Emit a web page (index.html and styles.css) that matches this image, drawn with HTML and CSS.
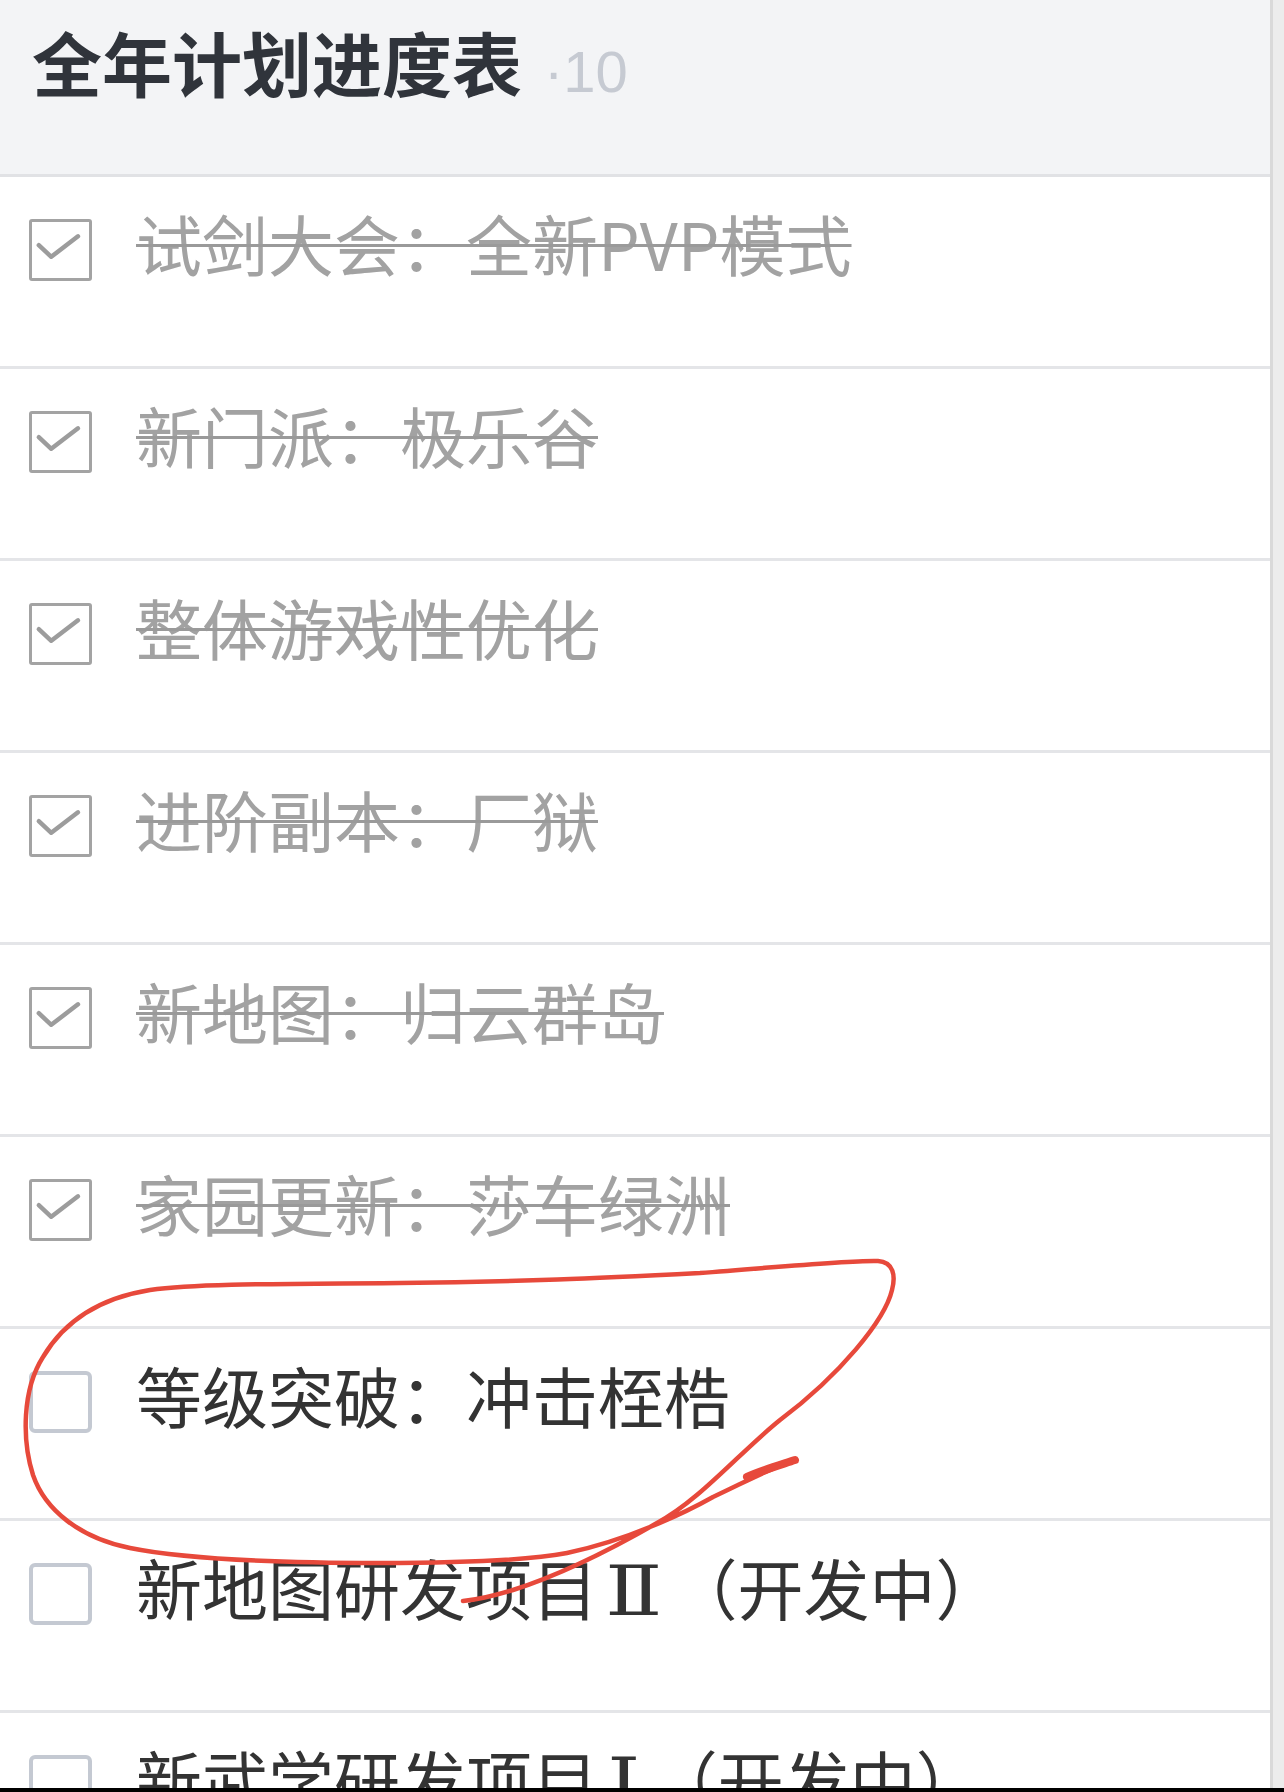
FILE: index.html
```html
<!DOCTYPE html>
<html lang="zh-CN">
<head>
    <meta charset="UTF-8">
    <meta name="viewport" content="width=device-width, initial-scale=1.0">
    <title>全年计划进度表</title>
    <link rel="stylesheet" href="styles.css">
</head>
<body>
    <div class="panel">
        <div class="panel-head">
            <h2>全年计划进度表</h2>
            <span class="count">·10</span>
        </div>

        <ul class="todo-list">
            <li class="todo done">
                <span class="box"><svg viewBox="0 0 64 62"><path d="M11 29 L25 42 L55 19"/></svg></span>
                <span class="title">试剑大会：全新PVP模式</span>
            </li>
            <li class="todo done">
                <span class="box"><svg viewBox="0 0 64 62"><path d="M11 29 L25 42 L55 19"/></svg></span>
                <span class="title">新门派：极乐谷</span>
            </li>
            <li class="todo done">
                <span class="box"><svg viewBox="0 0 64 62"><path d="M11 29 L25 42 L55 19"/></svg></span>
                <span class="title">整体游戏性优化</span>
            </li>
            <li class="todo done">
                <span class="box"><svg viewBox="0 0 64 62"><path d="M11 29 L25 42 L55 19"/></svg></span>
                <span class="title">进阶副本：厂狱</span>
            </li>
            <li class="todo done">
                <span class="box"><svg viewBox="0 0 64 62"><path d="M11 29 L25 42 L55 19"/></svg></span>
                <span class="title">新地图：归云群岛</span>
            </li>
            <li class="todo done">
                <span class="box"><svg viewBox="0 0 64 62"><path d="M11 29 L25 42 L55 19"/></svg></span>
                <span class="title">家园更新：莎车绿洲</span>
            </li>
            <li class="todo">
                <span class="box"></span>
                <span class="title">等级突破：冲击桎梏</span>
            </li>
            <li class="todo">
                <span class="box"></span>
                <span class="title">新地图研发项目<span class="num">Ⅱ</span>（开发中）</span>
            </li>
            <li class="todo">
                <span class="box"></span>
                <span class="title">新武学研发项目<span class="num">Ⅰ</span>（开发中）</span>
            </li>
        </ul>
    </div>

    <!-- 手写圈注 -->
    <svg class="scribble" viewBox="0 0 1284 1792">
        <path class="ink" d="M795 1460
            C775 1466 745 1482 713 1497
            C690 1510 630 1540 567 1553
            C530 1560 470 1563 380 1563
            C300 1563 190 1560 130 1548
            C80 1538 45 1510 33 1475
            C22 1440 22 1390 43 1357
            C65 1320 100 1298 150 1290
            C200 1283 300 1284 400 1283
            C520 1282 600 1278 700 1273
            C780 1267 850 1260 878 1261
            C893 1262 896 1275 892 1290
            C885 1320 840 1375 780 1420
            C740 1452 700 1500 657 1523
            C610 1550 560 1575 513 1590
            C490 1597 475 1600 463 1601"/>
        <path class="ink thick" d="M795 1460 C780 1465 760 1471 747 1477"/>
    </svg>

    <div class="bottom-edge"></div>
</body>
</html>
```

FILE: styles.css
```css
body {
    margin: 0;
    width: 1284px;
    height: 1792px;
    overflow: hidden;
    background: #ececec;
    font-family: "Noto Sans CJK SC", "Noto Sans", sans-serif;
    color: #333;
}
.panel {
    width: 1270px;
    height: 100%;
    background: #fff;
    border-right: 3px solid #d9d9d9;
}
.panel-head {
    box-sizing: border-box;
    height: 177px;
    padding: 27px 0 0 32px;
    background: #f3f4f6;
    border-bottom: 3px solid #e1e2e5;
    display: flex;
    align-items: baseline;
}
.panel-head h2 {
    margin: 0;
    font-size: 70px;
    line-height: 70px;
    font-weight: 700;
    color: #30343b;
}
.count {
    margin-left: 22px;
    font-family: "Liberation Sans", Arial, sans-serif;
    font-size: 58px;
    color: #c6cad2;
}
.todo-list {
    list-style: none;
    margin: 0;
    padding: 0;
}
.todo {
    box-sizing: border-box;
    height: 192px;
    padding: 42px 0 0 29px;
    border-bottom: 3px solid #e4e5e8;
    display: flex;
    align-items: flex-start;
}
.box {
    box-sizing: border-box;
    flex: none;
    width: 63px;
    height: 62px;
    border: 4px solid #c4c9d2;
    border-radius: 6px;
    background: #fff;
}
.box svg {
    display: block;
    width: 100%;
    height: 100%;
    fill: none;
    stroke: #9c9c9c;
    stroke-width: 5;
    stroke-linecap: round;
    stroke-linejoin: round;
    transform: translate(-3px, -3px);
    overflow: visible;
}
.done .box {
    border: 3px solid #a3a3a3;
    border-radius: 3px;
}
.title {
    margin: -8px 0 0 44px;
    font-size: 66px;
    line-height: 62px;
    white-space: nowrap;
    color: #333;
}
.num {
    display: inline-block;
    font-family: "DejaVu Serif", "Liberation Serif", serif;
    font-size: 70px;
    line-height: 40px;
    margin: 0 14px 0 12px;
    transform: scaleX(1.2);
}
.done .title {
    color: #a2a2a2;
    text-decoration: line-through;
    text-decoration-thickness: 3px;
    text-decoration-color: #9a9a9a;
}
.scribble {
    position: absolute;
    left: 0;
    top: 0;
    width: 1284px;
    height: 1792px;
    pointer-events: none;
}
.ink {
    fill: none;
    stroke: #e7493b;
    stroke-width: 4.5;
    stroke-linecap: round;
    stroke-linejoin: round;
}
.ink.thick {
    stroke-width: 8;
}
.bottom-edge {
    position: fixed;
    left: 0;
    right: 0;
    bottom: 0;
    height: 4px;
    background: #000;
}
```
